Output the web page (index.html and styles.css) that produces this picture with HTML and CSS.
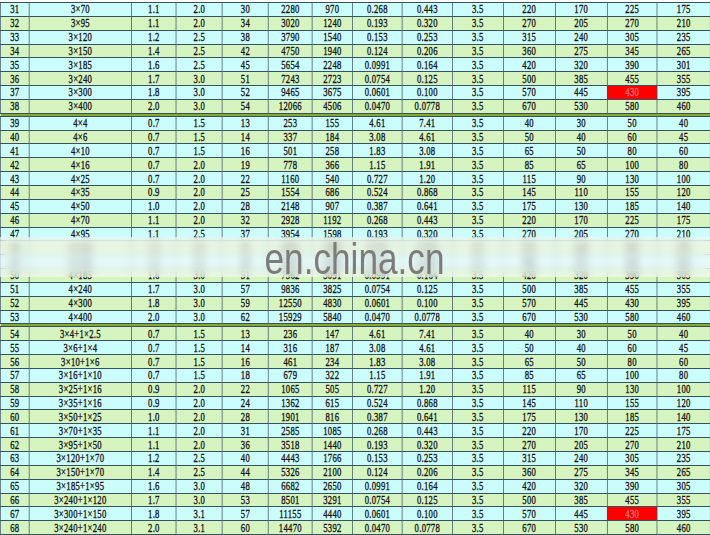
FILE: index.html
```html
<!DOCTYPE html>
<html>
<head>
<meta charset="utf-8">
<link rel="stylesheet" href="styles.css">
</head>
<body>
<div class="sheet">
<table class="grid">
<colgroup>
<col class="c0"><col class="c1"><col class="c2"><col class="c3"><col class="c4"><col class="c5"><col class="c6"><col class="c7"><col class="c8"><col class="c9"><col class="c10"><col class="c11"><col class="c12"><col class="c13">
</colgroup>
<tbody>
<tr class="cy"><td>31</td><td>3×70</td><td>1.1</td><td>2.0</td><td>30</td><td>2280</td><td>970</td><td>0.268</td><td>0.443</td><td>3.5</td><td>220</td><td>170</td><td>225</td><td>175</td></tr>
<tr class="gr"><td>32</td><td>3×95</td><td>1.1</td><td>2.0</td><td>34</td><td>3020</td><td>1240</td><td>0.193</td><td>0.320</td><td>3.5</td><td>270</td><td>205</td><td>270</td><td>210</td></tr>
<tr class="cy"><td>33</td><td>3×120</td><td>1.2</td><td>2.5</td><td>38</td><td>3790</td><td>1540</td><td>0.153</td><td>0.253</td><td>3.5</td><td>315</td><td>240</td><td>305</td><td>235</td></tr>
<tr class="gr"><td>34</td><td>3×150</td><td>1.4</td><td>2.5</td><td>42</td><td>4750</td><td>1940</td><td>0.124</td><td>0.206</td><td>3.5</td><td>360</td><td>275</td><td>345</td><td>265</td></tr>
<tr class="cy"><td>35</td><td>3×185</td><td>1.6</td><td>2.5</td><td>45</td><td>5654</td><td>2248</td><td>0.0991</td><td>0.164</td><td>3.5</td><td>420</td><td>320</td><td>390</td><td>301</td></tr>
<tr class="gr"><td>36</td><td>3×240</td><td>1.7</td><td>3.0</td><td>51</td><td>7243</td><td>2723</td><td>0.0754</td><td>0.125</td><td>3.5</td><td>500</td><td>385</td><td>455</td><td>355</td></tr>
<tr class="cy"><td>37</td><td>3×300</td><td>1.8</td><td>3.0</td><td>52</td><td>9465</td><td>3675</td><td>0.0601</td><td>0.100</td><td>3.5</td><td>570</td><td>445</td><td class="hot">430</td><td>395</td></tr>
<tr class="gr"><td>38</td><td>3×400</td><td>2.0</td><td>3.0</td><td>54</td><td>12066</td><td>4506</td><td>0.0470</td><td>0.0778</td><td>3.5</td><td>670</td><td>530</td><td>580</td><td>460</td></tr>
<tr class="sep"><td colspan="14"></td></tr>
<tr class="cy"><td>39</td><td>4×4</td><td>0.7</td><td>1.5</td><td>13</td><td>253</td><td>155</td><td>4.61</td><td>7.41</td><td>3.5</td><td>40</td><td>30</td><td>50</td><td>40</td></tr>
<tr class="gr"><td>40</td><td>4×6</td><td>0.7</td><td>1.5</td><td>14</td><td>337</td><td>184</td><td>3.08</td><td>4.61</td><td>3.5</td><td>50</td><td>40</td><td>60</td><td>45</td></tr>
<tr class="cy"><td>41</td><td>4×10</td><td>0.7</td><td>1.5</td><td>16</td><td>501</td><td>258</td><td>1.83</td><td>3.08</td><td>3.5</td><td>65</td><td>50</td><td>80</td><td>60</td></tr>
<tr class="gr"><td>42</td><td>4×16</td><td>0.7</td><td>2.0</td><td>19</td><td>778</td><td>366</td><td>1.15</td><td>1.91</td><td>3.5</td><td>85</td><td>65</td><td>100</td><td>80</td></tr>
<tr class="cy"><td>43</td><td>4×25</td><td>0.7</td><td>2.0</td><td>22</td><td>1160</td><td>540</td><td>0.727</td><td>1.20</td><td>3.5</td><td>115</td><td>90</td><td>130</td><td>100</td></tr>
<tr class="gr"><td>44</td><td>4×35</td><td>0.9</td><td>2.0</td><td>25</td><td>1554</td><td>686</td><td>0.524</td><td>0.868</td><td>3.5</td><td>145</td><td>110</td><td>155</td><td>120</td></tr>
<tr class="cy"><td>45</td><td>4×50</td><td>1.0</td><td>2.0</td><td>28</td><td>2148</td><td>907</td><td>0.387</td><td>0.641</td><td>3.5</td><td>175</td><td>130</td><td>185</td><td>140</td></tr>
<tr class="gr"><td>46</td><td>4×70</td><td>1.1</td><td>2.0</td><td>32</td><td>2928</td><td>1192</td><td>0.268</td><td>0.443</td><td>3.5</td><td>220</td><td>170</td><td>225</td><td>175</td></tr>
<tr class="cy"><td>47</td><td>4×95</td><td>1.1</td><td>2.5</td><td>37</td><td>3954</td><td>1598</td><td>0.193</td><td>0.320</td><td>3.5</td><td>270</td><td>205</td><td>270</td><td>210</td></tr>
<tr class="gr"><td>48</td><td>4×120</td><td>1.2</td><td>2.5</td><td>42</td><td>4932</td><td>1986</td><td>0.153</td><td>0.253</td><td>3.5</td><td>315</td><td>240</td><td>305</td><td>235</td></tr>
<tr class="cy"><td>49</td><td>4×150</td><td>1.4</td><td>2.5</td><td>46</td><td>6165</td><td>2538</td><td>0.124</td><td>0.206</td><td>3.5</td><td>360</td><td>275</td><td>345</td><td>265</td></tr>
<tr class="gr"><td>50</td><td>4×185</td><td>1.6</td><td>3.0</td><td>51</td><td>7562</td><td>3091</td><td>0.0991</td><td>0.164</td><td>3.5</td><td>420</td><td>320</td><td>390</td><td>305</td></tr>
<tr class="cy"><td>51</td><td>4×240</td><td>1.7</td><td>3.0</td><td>57</td><td>9836</td><td>3825</td><td>0.0754</td><td>0.125</td><td>3.5</td><td>500</td><td>385</td><td>455</td><td>355</td></tr>
<tr class="gr"><td>52</td><td>4×300</td><td>1.8</td><td>3.0</td><td>59</td><td>12550</td><td>4830</td><td>0.0601</td><td>0.100</td><td>3.5</td><td>570</td><td>445</td><td>430</td><td>395</td></tr>
<tr class="cy"><td>53</td><td>4×400</td><td>2.0</td><td>3.0</td><td>62</td><td>15929</td><td>5840</td><td>0.0470</td><td>0.0778</td><td>3.5</td><td>670</td><td>530</td><td>580</td><td>460</td></tr>
<tr class="sep"><td colspan="14"></td></tr>
<tr class="gr"><td>54</td><td>3×4+1×2.5</td><td>0.7</td><td>1.5</td><td>13</td><td>236</td><td>147</td><td>4.61</td><td>7.41</td><td>3.5</td><td>40</td><td>30</td><td>50</td><td>40</td></tr>
<tr class="cy"><td>55</td><td>3×6+1×4</td><td>0.7</td><td>1.5</td><td>14</td><td>316</td><td>187</td><td>3.08</td><td>4.61</td><td>3.5</td><td>50</td><td>40</td><td>60</td><td>45</td></tr>
<tr class="gr"><td>56</td><td>3×10+1×6</td><td>0.7</td><td>1.5</td><td>16</td><td>461</td><td>234</td><td>1.83</td><td>3.08</td><td>3.5</td><td>65</td><td>50</td><td>80</td><td>60</td></tr>
<tr class="cy"><td>57</td><td>3×16+1×10</td><td>0.7</td><td>1.5</td><td>18</td><td>679</td><td>322</td><td>1.15</td><td>1.91</td><td>3.5</td><td>85</td><td>65</td><td>100</td><td>80</td></tr>
<tr class="gr"><td>58</td><td>3×25+1×16</td><td>0.9</td><td>2.0</td><td>22</td><td>1065</td><td>505</td><td>0.727</td><td>1.20</td><td>3.5</td><td>115</td><td>90</td><td>130</td><td>100</td></tr>
<tr class="cy"><td>59</td><td>3×35+1×16</td><td>0.9</td><td>2.0</td><td>24</td><td>1362</td><td>615</td><td>0.524</td><td>0.868</td><td>3.5</td><td>145</td><td>110</td><td>155</td><td>120</td></tr>
<tr class="gr"><td>60</td><td>3×50+1×25</td><td>1.0</td><td>2.0</td><td>28</td><td>1901</td><td>816</td><td>0.387</td><td>0.641</td><td>3.5</td><td>175</td><td>130</td><td>185</td><td>140</td></tr>
<tr class="cy"><td>61</td><td>3×70+1×35</td><td>1.1</td><td>2.0</td><td>31</td><td>2585</td><td>1085</td><td>0.268</td><td>0.443</td><td>3.5</td><td>220</td><td>170</td><td>225</td><td>175</td></tr>
<tr class="gr"><td>62</td><td>3×95+1×50</td><td>1.1</td><td>2.0</td><td>36</td><td>3518</td><td>1440</td><td>0.193</td><td>0.320</td><td>3.5</td><td>270</td><td>205</td><td>270</td><td>210</td></tr>
<tr class="cy"><td>63</td><td>3×120+1×70</td><td>1.2</td><td>2.5</td><td>40</td><td>4443</td><td>1766</td><td>0.153</td><td>0.253</td><td>3.5</td><td>315</td><td>240</td><td>305</td><td>235</td></tr>
<tr class="gr"><td>64</td><td>3×150+1×70</td><td>1.4</td><td>2.5</td><td>44</td><td>5326</td><td>2100</td><td>0.124</td><td>0.206</td><td>3.5</td><td>360</td><td>275</td><td>345</td><td>265</td></tr>
<tr class="cy"><td>65</td><td>3×185+1×95</td><td>1.6</td><td>3.0</td><td>48</td><td>6682</td><td>2650</td><td>0.0991</td><td>0.164</td><td>3.5</td><td>420</td><td>320</td><td>390</td><td>305</td></tr>
<tr class="gr"><td>66</td><td>3×240+1×120</td><td>1.7</td><td>3.0</td><td>53</td><td>8501</td><td>3291</td><td>0.0754</td><td>0.125</td><td>3.5</td><td>500</td><td>385</td><td>455</td><td>355</td></tr>
<tr class="cy"><td>67</td><td>3×300+1×150</td><td>1.8</td><td>3.1</td><td>57</td><td>11155</td><td>4440</td><td>0.0601</td><td>0.100</td><td>3.5</td><td>570</td><td>445</td><td class="hot">430</td><td>395</td></tr>
<tr class="gr"><td>68</td><td>3×240+1×240</td><td>2.0</td><td>3.1</td><td>60</td><td>14470</td><td>5392</td><td>0.0470</td><td>0.0778</td><td>3.5</td><td>670</td><td>530</td><td>580</td><td>460</td></tr>
</tbody>
</table>
<div class="wm"><span class="wm-text">en.china.cn</span></div>
</div>
</body>
</html>
```

FILE: styles.css
```css
html, body {
  margin: 0;
  padding: 0;
  background: #ffffff;
}

.sheet {
  position: relative;
  width: 710px;
  height: 535px;
  padding-top: 2px;
  box-sizing: border-box;
  overflow: hidden;
}

.grid {
  width: 986px;
  table-layout: fixed;
  border-collapse: collapse;
  transform: scaleX(0.72);
  transform-origin: 0 0;
  font-family: "Liberation Serif", serif;
  font-size: 12px;
  font-weight: normal;
  color: #111111;
  -webkit-text-stroke: 0.35px #1a1a1a;
  word-spacing: 0;
}

.c0 { width: 40.3px; }
.c1 { width: 141.7px; }
.c2 { width: 62.5px; }
.c3 { width: 63.9px; }
.c4 { width: 63.9px; }
.c5 { width: 61.1px; }
.c6 { width: 55.6px; }
.c7 { width: 69.4px; }
.c8 { width: 69.4px; }
.c9 { width: 70.8px; }
.c10 { width: 72.2px; }
.c11 { width: 72.2px; }
.c12 { width: 69.4px; }
.c13 { width: 73.6px; }

.grid tr {
  height: 13.85px;
}

.grid td {
  padding: 0;
  border-style: solid;
  border-color: #34525f;
  border-width: 1px 1.4px;
  text-align: center;
  line-height: 12px;
  letter-spacing: 0.4px;
  white-space: nowrap;
}

.cy td { background: #ccfdfd; }
.gr td { background: #d5f4c0; }

.grid td.hot {
  background: #ff0000;
  color: #f07070;
  -webkit-text-stroke: 0.35px #f07070;
}

.grid tr.sep {
  height: 2px;
}

.sep td {
  height: 2px;
  border: 0;
  background: linear-gradient(#6c8a16 0, #6c8a16 60%, #a6c246 60%, #a6c246 100%);
}

.wm {
  position: absolute;
  left: 0;
  right: 0;
  top: 237px;
  height: 40px;
  display: flex;
  align-items: center;
  justify-content: center;
  background: rgba(255, 255, 255, 0.55);
  backdrop-filter: blur(4px);
}

.wm-text {
  font-family: "Liberation Sans", sans-serif;
  font-size: 44px;
  line-height: 40px;
  padding-top: 3px;
  color: #7c7c7c;
  -webkit-text-stroke: 0;
  transform: scaleX(0.8);
}
```
